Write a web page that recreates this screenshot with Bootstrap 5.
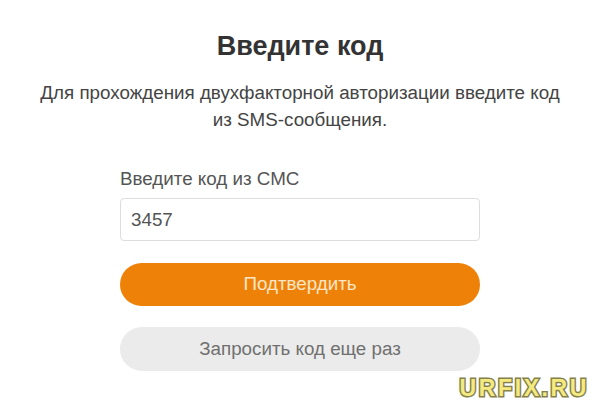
<!DOCTYPE html>
<html lang="ru"><head><meta charset="utf-8">
<link href="https://cdn.jsdelivr.net/npm/bootstrap@5.3.0/dist/css/bootstrap.min.css" rel="stylesheet">
<style>
html,body{height:400px;overflow:hidden;background:#fff}
body{font-family:"Liberation Sans",Arial,sans-serif;color:#333;position:relative}
.pg{padding-top:29px}
.ttl{font-size:27px;font-weight:700;line-height:34px;margin:0 0 16px;color:#333}
.dsc{font-size:18.8px;line-height:27px;width:540px;margin:0 auto 35px;color:#444}
.frm{width:360px;margin:0 auto}
.lbl{font-size:18.8px;line-height:22px;margin-bottom:8px;color:#555}
.frm .inp{height:43px;border-radius:4px;border:1px solid #ddd;font-size:18.8px;padding:0 10px;color:#555;margin-bottom:22px;box-shadow:none}
.frm .b1,.frm .b2{height:43px;border-radius:22px;font-size:18.8px;border:0;display:flex;align-items:center;justify-content:center;padding:0}
.frm .b1{background:#ee8208;color:#fde6c8;margin-bottom:21px}
.frm .b2{background:#ebebeb;color:#707070;height:44px}
.wm{position:absolute;right:11px;bottom:-2px;font-size:23px;line-height:28px;font-weight:700;letter-spacing:2.6px;color:#f4ea80;-webkit-text-stroke:3px #85814c;paint-order:stroke fill}
</style></head><body>
<div class="pg text-center">
<h1 class="ttl">Введите код</h1>
<p class="dsc">Для прохождения двухфакторной авторизации введите код из SMS-сообщения.</p>
<form class="frm text-start">
<label class="lbl d-block" for="c">Введите код из СМС</label>
<input id="c" class="form-control inp" value="3457">
<button type="button" class="btn w-100 b1">Подтвердить</button>
<button type="button" class="btn w-100 b2">Запросить код еще раз</button>
</form>
</div>
<div class="wm">URFIX.RU</div>
</body></html>
